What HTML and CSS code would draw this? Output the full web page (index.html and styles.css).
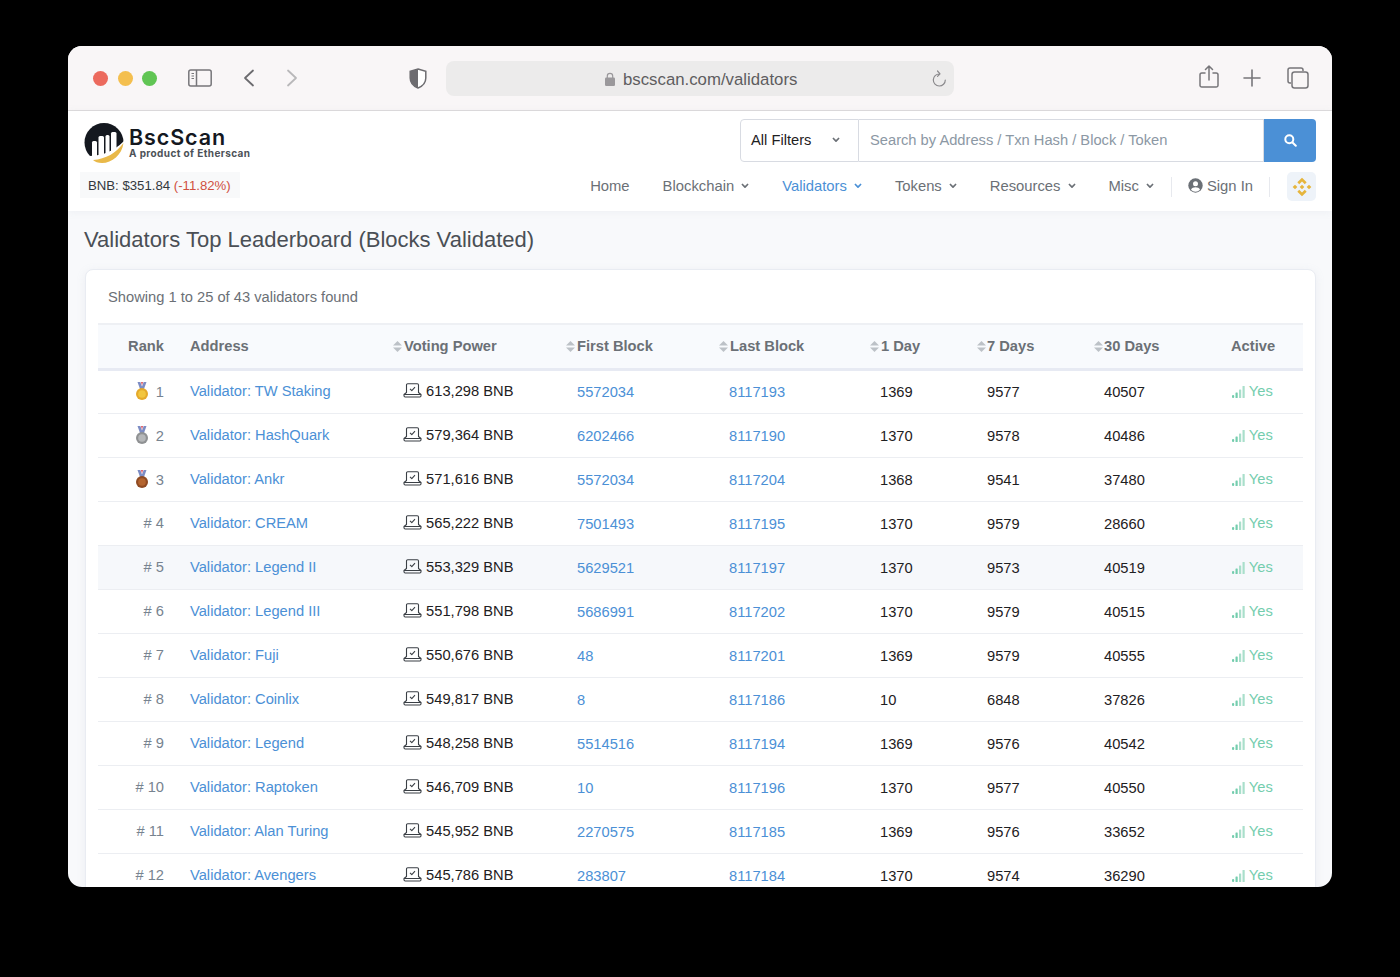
FILE: index.html
```html
<!DOCTYPE html>
<html lang="en">
<head>
    <meta charset="UTF-8">
    <meta name="viewport" content="width=device-width, initial-scale=1.0">
    <title>Validators Top Leaderboard</title>
    <link rel="stylesheet" href="styles.css">
</head>
<body>
    <svg class="defs" width="0" height="0">
        <symbol id="sort" viewBox="0 0 9 11"><path d="M4.5 0 9 4.6H0z" /><path d="M0 6.4h9L4.5 11z" /></symbol>
        <symbol id="caret" viewBox="0 0 8 6"><path d="M1.400 1.500 4 4.100 6.600 1.500" fill="none" stroke="currentColor" stroke-width="1.700" stroke-linecap="round" stroke-linejoin="round" /></symbol>
        <symbol id="laptop" viewBox="0 0 19 15"><path d="M3.500 9.500V2a1.200 1.200 0 0 1 1.200-1.200h9.600A1.200 1.200 0 0 1 15.500 2v7.500L18 11.500H1zM1 11.500h17v1.300a1.200 1.200 0 0 1-1.200 1.200H2.200A1.200 1.200 0 0 1 1 12.800zM7 5.800l1.800 1.800 3.200-3.400" fill="none" stroke="#3a3f45" stroke-width="1.100" stroke-linejoin="round" /></symbol>
        <symbol id="signal" viewBox="0 0 13 12"><rect x="0" y="9" width="2.200" height="3" rx="1" fill="#74cdae" /><rect x="3.500" y="6.500" width="2.200" height="5.500" rx=".6" fill="#74cdae" /><rect x="7" y="3.500" width="2.200" height="8.500" rx=".6" fill="#a9dfcb" /><rect x="10.500" y="0" width="2.200" height="12" rx=".6" fill="#a9dfcb" /></symbol>
        <symbol id="ribbon" viewBox="0 0 12 8"><path d="M1.500 0h2.800L6 4.500 7.700 0h2.800L7.800 7.500H4.200z" fill="#7c8cc4" /><path d="M4.800 0h2.400L6 3.500z" fill="#e0666f" /></symbol>
    </svg>

    <div class="window">
        <div class="toolbar">
            <span class="light light-red"></span>
            <span class="light light-yellow"></span>
            <span class="light light-green"></span>
            <svg class="tool-sidebar" width="24" height="18" viewBox="0 0 24 18" fill="none" stroke="#77767a" stroke-width="1.500"><rect x=".8" y="1" width="22.400" height="16" rx="2" /><path d="M8.500 1v16" /><path d="M3.500 4.500h2.500M3.500 7h2.500M3.500 9.500h2.500" stroke-width="1.100" /></svg>
            <svg class="tool-back" width="12" height="18" viewBox="0 0 12 18" fill="none" stroke="#6c6b6f" stroke-width="1.800" stroke-linecap="round" stroke-linejoin="round"><path d="M10 1.500 2 9l8 7.500" /></svg>
            <svg class="tool-forward" width="12" height="18" viewBox="0 0 12 18" fill="none" stroke="#b9b8ba" stroke-width="1.800" stroke-linecap="round" stroke-linejoin="round"><path d="M2 1.500 10 9l-8 7.500" /></svg>
            <svg class="tool-shield" width="18" height="21" viewBox="0 0 18 21"><path d="M9 1 16.800 3.200V10c0 4.800-3.300 8.200-7.800 10C4.500 18.200 1.200 14.800 1.200 10V3.200z" fill="#fff" stroke="#6d6c70" stroke-width="1.500" /><path d="M9 1v19C4.500 18.200 1.200 14.800 1.200 10V3.200z" fill="#6d6c70" /></svg>
            <div class="urlbar">
                <svg class="url-lock" width="10" height="14" viewBox="0 0 10 14"><path d="M2.300 6V4a2.700 2.700 0 0 1 5.400 0v2" fill="none" stroke="#9a989b" stroke-width="1.200" /><rect y="5.500" width="10" height="8.500" rx="1.200" fill="#9a989b" /></svg>
                <span class="url-text">bscscan.com/validators</span>
                <svg class="url-reload" width="15" height="17" viewBox="0 0 15 17" fill="none" stroke="#8a898c" stroke-width="1.200" stroke-linecap="round" stroke-linejoin="round"><path d="M7.500 4A6 6 0 1 0 13.300 10M5.500 1 8 3.800 5.500 6.300" /></svg>
            </div>
            <svg class="tool-share" width="20" height="23" viewBox="0 0 20 23" fill="none" stroke="#77767a" stroke-width="1.500" stroke-linecap="round" stroke-linejoin="round"><path d="M6 8H2.800A1.800 1.800 0 0 0 1 9.800v10.400A1.800 1.800 0 0 0 2.800 22h14.400a1.800 1.800 0 0 0 1.800-1.800V9.800A1.800 1.800 0 0 0 17.200 8H14M10 15V1M6.500 4.500 10 1l3.500 3.500" /></svg>
            <svg class="tool-plus" width="18" height="18" viewBox="0 0 18 18" fill="none" stroke="#77767a" stroke-width="1.600" stroke-linecap="round"><path d="M9 1v16M1 9h16" /></svg>
            <svg class="tool-tabs" width="22" height="22" viewBox="0 0 22 22" fill="none" stroke="#77767a" stroke-width="1.500"><path d="M4 16H3a2 2 0 0 1-2-2V3a2 2 0 0 1 2-2h11a2 2 0 0 1 2 2v1" /><rect x="5" y="5" width="16" height="16" rx="2.500" /></svg>
        </div>

        <header class="site-header">
            <div class="brand-col">
                <div class="brand">
                    <svg class="brand-mark" width="40" height="40" viewBox="0 0 40 40">
                        <circle cx="20" cy="19.500" r="19.500" fill="#14181f" />
                        <rect x="8" y="18" width="5" height="20" rx="1.500" fill="#fff" />
                        <rect x="14.500" y="13" width="5.500" height="24" rx="1.500" fill="#fff" />
                        <rect x="21.500" y="12" width="4" height="22" rx="1.500" fill="#fff" />
                        <rect x="27" y="9" width="5.500" height="22" rx="1.500" fill="#fff" />
                        <path d="M5 33Q25 33 40 18V40H5z" fill="#fff" />
                        <path d="M39.500 20C38 32 28 40 18 40 14 40 11 39 9 37 22 36 32 30 39.500 20z" fill="#e9b949" />
                    </svg>
                    <div class="brand-text">
                        <div class="brand-name">BscScan</div>
                        <div class="brand-sub">A product of Etherscan</div>
                    </div>
                </div>
                <div class="price">BNB: $351.84 <span class="price-change">(-11.82%)</span></div>
            </div>
            <div class="header-right">
                <div class="search">
                    <div class="search-filter">
                        <span>All Filters</span>
                        <svg class="caret" width="8" height="6"><use href="#caret" /></svg>
                    </div>
                    <div class="search-input">Search by Address / Txn Hash / Block / Token</div>
                    <div class="search-btn">
                        <svg width="13" height="13" viewBox="0 0 13 13" fill="none" stroke="#fff" stroke-width="2" stroke-linecap="round"><circle cx="5.300" cy="5.300" r="4" /><path d="m8.500 8.500 3.300 3.300" /></svg>
                    </div>
                </div>
                <nav class="nav">
                    <a class="nav-item">Home</a>
                    <a class="nav-item">Blockchain <svg class="caret" width="8" height="6"><use href="#caret" /></svg></a>
                    <a class="nav-item nav-active">Validators <svg class="caret" width="8" height="6"><use href="#caret" /></svg></a>
                    <a class="nav-item">Tokens <svg class="caret" width="8" height="6"><use href="#caret" /></svg></a>
                    <a class="nav-item">Resources <svg class="caret" width="8" height="6"><use href="#caret" /></svg></a>
                    <a class="nav-item">Misc <svg class="caret" width="8" height="6"><use href="#caret" /></svg></a>
                    <span class="nav-divider nav-divider-first"></span>
                    <a class="nav-signin">
                        <svg width="15" height="15" viewBox="0 0 15 15"><circle cx="7.500" cy="7.500" r="7.200" fill="#6b7076" /><circle cx="7.500" cy="5.700" r="2.500" fill="#fff" /><path d="M3 11.800c.8-1.800 2.500-2.500 4.500-2.500s3.700.7 4.500 2.500a6 6 0 0 1-9 0z" fill="#fff" /></svg>
                        Sign In
                    </a>
                    <span class="nav-divider"></span>
                    <span class="chain-btn">
                        <svg width="20" height="20" viewBox="0 0 18 18" fill="#e6b53c"><path d="M9 .6 13.200 4.800 11.500 6.500 9 4 6.500 6.500 4.800 4.800z" /><path d="M9 17.400 13.200 13.200 11.500 11.500 9 14 6.500 11.500 4.800 13.200z" /><path d="M2.700 6.900 4.800 9 2.700 11.100.6 9z" /><path d="M15.300 6.900 17.400 9 15.300 11.100 13.200 9z" /><path d="M9 6.900 11.100 9 9 11.100 6.900 9z" /></svg>
                    </span>
                </nav>
            </div>
        </header>

        <main class="content">
            <h1 class="page-title">Validators Top Leaderboard (Blocks Validated)</h1>
            <section class="card">
                <p class="card-summary">Showing 1 to 25 of 43 validators found</p>
                <table class="board">
                    <colgroup>
                        <col class="col-rank"><col class="col-address"><col class="col-power"><col class="col-first"><col class="col-last"><col class="col-day"><col class="col-week"><col class="col-month"><col class="col-active">
                    </colgroup>
                    <thead>
                        <tr>
                            <th class="rank">Rank</th>
                            <th>Address</th>
                            <th class="sorted"><svg class="sort" width="9" height="11"><use href="#sort" /></svg>Voting Power</th>
                            <th class="sorted"><svg class="sort" width="9" height="11"><use href="#sort" /></svg>First Block</th>
                            <th class="sorted"><svg class="sort" width="9" height="11"><use href="#sort" /></svg>Last Block</th>
                            <th class="sorted"><svg class="sort" width="9" height="11"><use href="#sort" /></svg>1 Day</th>
                            <th class="sorted"><svg class="sort sort-tight" width="9" height="11"><use href="#sort" /></svg>7 Days</th>
                            <th class="sorted"><svg class="sort sort-tight" width="9" height="11"><use href="#sort" /></svg>30 Days</th>
                            <th>Active</th>
                        </tr>
                    </thead>
                    <tbody>
                        <tr>
                            <td class="rank"><svg class="medal" width="14" height="18" viewBox="0 0 14 18"><use href="#ribbon" width="12" height="8" x="1" /><circle cx="7" cy="12" r="6" fill="#e5a92a" /><circle cx="7" cy="12" r="3.800" fill="#f2c63f" /></svg> 1</td>
                            <td><a>Validator: TW Staking</a></td>
                            <td><svg class="power" width="19" height="15"><use href="#laptop" /></svg> 613,298 BNB</td>
                            <td class="num"><a>5572034</a></td>
                            <td class="num"><a>8117193</a></td>
                            <td class="num">1369</td>
                            <td class="num">9577</td>
                            <td class="num">40507</td>
                            <td class="active"><svg width="13" height="12"><use href="#signal" /></svg> Yes</td>
                        </tr>
                        <tr>
                            <td class="rank"><svg class="medal" width="14" height="18" viewBox="0 0 14 18"><use href="#ribbon" width="12" height="8" x="1" /><circle cx="7" cy="12" r="6" fill="#8f9193" /><circle cx="7" cy="12" r="3.800" fill="#b5b7b9" /></svg> 2</td>
                            <td><a>Validator: HashQuark</a></td>
                            <td><svg class="power" width="19" height="15"><use href="#laptop" /></svg> 579,364 BNB</td>
                            <td class="num"><a>6202466</a></td>
                            <td class="num"><a>8117190</a></td>
                            <td class="num">1370</td>
                            <td class="num">9578</td>
                            <td class="num">40486</td>
                            <td class="active"><svg width="13" height="12"><use href="#signal" /></svg> Yes</td>
                        </tr>
                        <tr>
                            <td class="rank"><svg class="medal" width="14" height="18" viewBox="0 0 14 18"><use href="#ribbon" width="12" height="8" x="1" /><circle cx="7" cy="12" r="6" fill="#8f4a22" /><circle cx="7" cy="12" r="3.800" fill="#b5652f" /></svg> 3</td>
                            <td><a>Validator: Ankr</a></td>
                            <td><svg class="power" width="19" height="15"><use href="#laptop" /></svg> 571,616 BNB</td>
                            <td class="num"><a>5572034</a></td>
                            <td class="num"><a>8117204</a></td>
                            <td class="num">1368</td>
                            <td class="num">9541</td>
                            <td class="num">37480</td>
                            <td class="active"><svg width="13" height="12"><use href="#signal" /></svg> Yes</td>
                        </tr>
                        <tr>
                            <td class="rank"># 4</td>
                            <td><a>Validator: CREAM</a></td>
                            <td><svg class="power" width="19" height="15"><use href="#laptop" /></svg> 565,222 BNB</td>
                            <td class="num"><a>7501493</a></td>
                            <td class="num"><a>8117195</a></td>
                            <td class="num">1370</td>
                            <td class="num">9579</td>
                            <td class="num">28660</td>
                            <td class="active"><svg width="13" height="12"><use href="#signal" /></svg> Yes</td>
                        </tr>
                        <tr class="hovered">
                            <td class="rank"># 5</td>
                            <td><a>Validator: Legend II</a></td>
                            <td><svg class="power" width="19" height="15"><use href="#laptop" /></svg> 553,329 BNB</td>
                            <td class="num"><a>5629521</a></td>
                            <td class="num"><a>8117197</a></td>
                            <td class="num">1370</td>
                            <td class="num">9573</td>
                            <td class="num">40519</td>
                            <td class="active"><svg width="13" height="12"><use href="#signal" /></svg> Yes</td>
                        </tr>
                        <tr>
                            <td class="rank"># 6</td>
                            <td><a>Validator: Legend III</a></td>
                            <td><svg class="power" width="19" height="15"><use href="#laptop" /></svg> 551,798 BNB</td>
                            <td class="num"><a>5686991</a></td>
                            <td class="num"><a>8117202</a></td>
                            <td class="num">1370</td>
                            <td class="num">9579</td>
                            <td class="num">40515</td>
                            <td class="active"><svg width="13" height="12"><use href="#signal" /></svg> Yes</td>
                        </tr>
                        <tr>
                            <td class="rank"># 7</td>
                            <td><a>Validator: Fuji</a></td>
                            <td><svg class="power" width="19" height="15"><use href="#laptop" /></svg> 550,676 BNB</td>
                            <td class="num"><a>48</a></td>
                            <td class="num"><a>8117201</a></td>
                            <td class="num">1369</td>
                            <td class="num">9579</td>
                            <td class="num">40555</td>
                            <td class="active"><svg width="13" height="12"><use href="#signal" /></svg> Yes</td>
                        </tr>
                        <tr>
                            <td class="rank"># 8</td>
                            <td><a>Validator: Coinlix</a></td>
                            <td><svg class="power" width="19" height="15"><use href="#laptop" /></svg> 549,817 BNB</td>
                            <td class="num"><a>8</a></td>
                            <td class="num"><a>8117186</a></td>
                            <td class="num">10</td>
                            <td class="num">6848</td>
                            <td class="num">37826</td>
                            <td class="active"><svg width="13" height="12"><use href="#signal" /></svg> Yes</td>
                        </tr>
                        <tr>
                            <td class="rank"># 9</td>
                            <td><a>Validator: Legend</a></td>
                            <td><svg class="power" width="19" height="15"><use href="#laptop" /></svg> 548,258 BNB</td>
                            <td class="num"><a>5514516</a></td>
                            <td class="num"><a>8117194</a></td>
                            <td class="num">1369</td>
                            <td class="num">9576</td>
                            <td class="num">40542</td>
                            <td class="active"><svg width="13" height="12"><use href="#signal" /></svg> Yes</td>
                        </tr>
                        <tr>
                            <td class="rank"># 10</td>
                            <td><a>Validator: Raptoken</a></td>
                            <td><svg class="power" width="19" height="15"><use href="#laptop" /></svg> 546,709 BNB</td>
                            <td class="num"><a>10</a></td>
                            <td class="num"><a>8117196</a></td>
                            <td class="num">1370</td>
                            <td class="num">9577</td>
                            <td class="num">40550</td>
                            <td class="active"><svg width="13" height="12"><use href="#signal" /></svg> Yes</td>
                        </tr>
                        <tr>
                            <td class="rank"># 11</td>
                            <td><a>Validator: Alan Turing</a></td>
                            <td><svg class="power" width="19" height="15"><use href="#laptop" /></svg> 545,952 BNB</td>
                            <td class="num"><a>2270575</a></td>
                            <td class="num"><a>8117185</a></td>
                            <td class="num">1369</td>
                            <td class="num">9576</td>
                            <td class="num">33652</td>
                            <td class="active"><svg width="13" height="12"><use href="#signal" /></svg> Yes</td>
                        </tr>
                        <tr>
                            <td class="rank"># 12</td>
                            <td><a>Validator: Avengers</a></td>
                            <td><svg class="power" width="19" height="15"><use href="#laptop" /></svg> 545,786 BNB</td>
                            <td class="num"><a>283807</a></td>
                            <td class="num"><a>8117184</a></td>
                            <td class="num">1370</td>
                            <td class="num">9574</td>
                            <td class="num">36290</td>
                            <td class="active"><svg width="13" height="12"><use href="#signal" /></svg> Yes</td>
                        </tr>
                    </tbody>
                </table>
            </section>
        </main>
    </div>
</body>
</html>
```

FILE: styles.css
```css
* {
    box-sizing: border-box;
}
html, body {
    height: 100%;
}
body {
    margin: 0;
    background: #000;
    font-family: "Liberation Sans", Arial, sans-serif;
    font-size: 14.700px;
    color: #1e2022;
    overflow: hidden;
}
svg {
    flex: none;
}
.defs {
    position: absolute;
}
.window {
    width: 1264px;
    height: 841px;
    margin: 46px auto 0;
    border-radius: 14px;
    background: #f8f9fb;
    overflow: hidden;
    display: flex;
    flex-direction: column;
}

/* browser chrome */
.toolbar {
    height: 65px;
    flex: none;
    display: flex;
    align-items: center;
    padding-left: 25px;
    background: #f9f6f7;
    border-bottom: 1px solid #dddbdc;
}
.light {
    width: 15px;
    height: 15px;
    border-radius: 50%;
    margin-right: 9.500px;
}
.light-red { background: #ec6a5e; }
.light-yellow { background: #f4bf4f; }
.light-green { background: #61c554; }
.tool-sidebar { margin-left: 21.500px; }
.tool-back { margin-left: 31px; }
.tool-forward { margin-left: 31px; }
.tool-shield { margin-left: 111px; }
.urlbar {
    width: 508px;
    height: 35px;
    margin-left: 19px;
    padding: 0 7px 0 159px;
    display: flex;
    align-items: center;
    border-radius: 8px;
    background: #ecebeb;
}
.url-lock { margin-top: 1px; }
.url-text {
    margin-left: 8px;
    padding-top: 3px;
    font-size: 16.800px;
    color: #5e5d60;
}
.url-reload { margin-left: auto; }
.tool-share { margin-left: 245px; margin-top: -3px; }
.tool-plus { margin-left: 24px; }
.tool-tabs { margin-left: 26px; }

/* site header */
.site-header {
    height: 100px;
    flex: none;
    display: flex;
    justify-content: space-between;
    padding: 8px 16px 0;
    background: #fff;
    box-shadow: 0 1px 8px rgba(150, 160, 180, 0.1);
    position: relative;
}
.brand {
    display: flex;
    align-items: center;
    gap: 5px;
    margin-top: 4px;
}
.brand-name {
    font-family: Inter, sans-serif;
    font-size: 21.500px;
    font-weight: 600;
    line-height: 20px;
    letter-spacing: 0.9px;
    color: #14181f;
}
.brand-sub {
    font-family: Inter, sans-serif;
    font-size: 10px;
    font-weight: 700;
    line-height: 12px;
    letter-spacing: 0.4px;
    color: #4c5157;
}
.price {
    width: 160px;
    height: 26px;
    margin: 9px 0 0 -4px;
    padding-left: 8px;
    font-size: 13.200px;
    line-height: 27px;
    color: #33383d;
    background: #f8f9fa;
}
.price-change {
    color: #d0503f;
}
.header-right {
    display: flex;
    flex-direction: column;
    align-items: flex-end;
}
.search {
    width: 576px;
    height: 43px;
    display: flex;
}
.search-filter {
    width: 119px;
    display: flex;
    align-items: center;
    justify-content: space-between;
    padding: 0 18px 2px 10px;
    color: #1e2022;
    border: 1px solid #d8dbe2;
    border-radius: 4px 0 0 4px;
}
.search-filter .caret {
    color: #6b7076;
}
.search-input {
    flex: 1;
    padding-left: 11px;
    line-height: 41px;
    color: #8c98a4;
    border: 1px solid #d8dbe2;
    border-left: 0;
}
.search-btn {
    width: 52px;
    display: flex;
    align-items: center;
    justify-content: center;
    background: #4b90d6;
    border-radius: 0 4px 4px 0;
}
.nav {
    height: 29px;
    margin-top: 10px;
    display: flex;
    align-items: center;
    font-size: 14.800px;
    color: #6b7076;
}
.nav-item {
    display: flex;
    align-items: center;
    gap: 7px;
    margin-left: 33px;
    padding-bottom: 2px;
}
.nav-active {
    color: #4b90d6;
}
.nav-divider {
    width: 1px;
    height: 20px;
    margin: 0 17px 0 16px;
    background: #e7e9ee;
}
.nav-divider-first {
    margin-left: 17px;
    margin-right: 16px;
}
.nav-signin {
    display: flex;
    align-items: center;
    gap: 4px;
    padding-bottom: 2px;
}
.chain-btn {
    width: 29px;
    height: 29px;
    display: flex;
    align-items: center;
    justify-content: center;
    border-radius: 5px;
    background: #eef3f9;
}

/* page */
.content {
    padding: 0 16px 0 17px;
}
.page-title {
    margin: 14px 0 15px -1px;
    font-size: 22px;
    font-weight: 400;
    line-height: 29px;
    color: #4a4f55;
}
.card {
    padding: 0 12px;
    background: #fff;
    border: 1px solid #e9ecf2;
    border-radius: 8px;
    box-shadow: 0 2px 10px rgba(150, 160, 180, 0.12);
}
.card-summary {
    margin: 0;
    height: 53px;
    padding-left: 10px;
    line-height: 54px;
    color: #6b7076;
}
.board {
    width: 1205px;
    table-layout: fixed;
    border-collapse: collapse;
}
.col-rank { width: 82px; }
.col-address { width: 213px; }
.col-power { width: 173px; }
.col-first { width: 153px; }
.col-last { width: 151px; }
.col-day { width: 107px; }
.col-week { width: 117px; }
.col-month { width: 127px; }
.col-active { width: 82px; }
.board th {
    height: 45px;
    padding: 0 10px;
    text-align: left;
    font-weight: 700;
    color: #6b7076;
    background: #f8fafd;
    border-top: 2px solid #eef0f4;
    border-bottom: 3px solid #e7eaf3;
}
.board th.sorted {
    padding-left: 0;
}
.board th.rank, .board td.rank {
    text-align: right;
    padding-right: 16px;
}
.sort {
    fill: #bcc1c7;
    margin-right: 2px;
    vertical-align: -1px;
}
.sort-tight {
    margin-right: 1px;
}
.board td {
    height: 44px;
    padding: 0 10px 1px;
    white-space: nowrap;
    border-bottom: 1px solid #eceef2;
}
.board td.rank {
    color: #77838f;
}
.board td.num {
    padding-top: 1px;
    padding-bottom: 0;
}
.board td:nth-child(4) {
    padding-left: 11px;
}
.board a {
    color: #4b90d6;
}
.hovered td {
    background: #f6f8fb;
}
.medal {
    vertical-align: -3px;
    margin-right: 3px;
}
.power {
    vertical-align: -2px;
}
.board td.active {
    padding-left: 11px;
    color: #74cdae;
}
.active svg {
    vertical-align: -2px;
}
```
